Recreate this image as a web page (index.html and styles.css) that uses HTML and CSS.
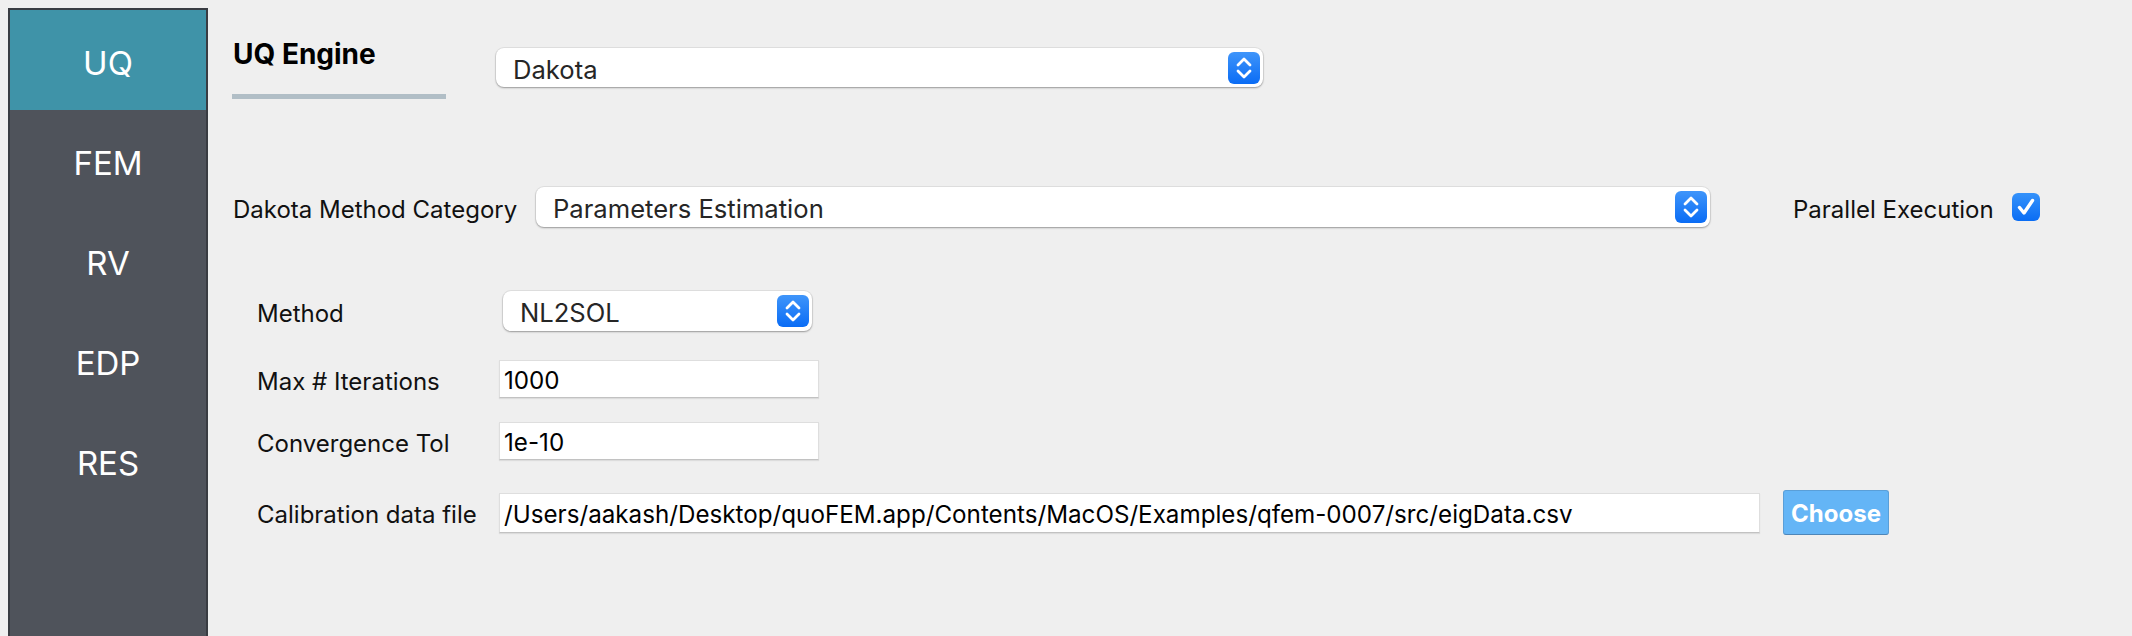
FILE: index.html
```html
<!DOCTYPE html>
<html lang="en">
<head>
<meta charset="utf-8">
<title>UQ Engine</title>
<link rel="stylesheet" href="styles.css">
</head>
<body>
<div class="app">
  <nav class="sidebar">
    <div class="nav-item active">UQ</div>
    <div class="nav-item">FEM</div>
    <div class="nav-item">RV</div>
    <div class="nav-item">EDP</div>
    <div class="nav-item">RES</div>
  </nav>
  <main class="content">
    <div class="engine-row">
      <div class="engine-tab">
        <div class="engine-title">UQ Engine</div>
        <div class="engine-bar"></div>
      </div>
      <div class="combo combo-engine">
        <span class="combo-text">Dakota</span>
        <svg class="stepper" viewBox="0 0 32 32" width="32" height="32"><defs><linearGradient id="sg1" x1="0" y1="0" x2="0" y2="1"><stop offset="0" stop-color="#3f95fa"/><stop offset="1" stop-color="#0a6cf5"/></linearGradient></defs><rect width="32" height="32" rx="6" fill="url(#sg1)"/><path d="M10 13 L16 7 L22 13 M10 19 L16 25 L22 19" fill="none" stroke="#fff" stroke-width="2.8" stroke-linecap="round" stroke-linejoin="round"/></svg>
      </div>
    </div>

    <div class="category-row">
      <span class="label category-label">Dakota Method Category</span>
      <div class="combo combo-category">
        <span class="combo-text">Parameters Estimation</span>
        <svg class="stepper" viewBox="0 0 32 32" width="32" height="32"><defs><linearGradient id="sg2" x1="0" y1="0" x2="0" y2="1"><stop offset="0" stop-color="#3f95fa"/><stop offset="1" stop-color="#0a6cf5"/></linearGradient></defs><rect width="32" height="32" rx="6" fill="url(#sg2)"/><path d="M10 13 L16 7 L22 13 M10 19 L16 25 L22 19" fill="none" stroke="#fff" stroke-width="2.8" stroke-linecap="round" stroke-linejoin="round"/></svg>
      </div>
      <span class="label parallel-label">Parallel Execution</span>
      <svg class="checkbox" viewBox="0 0 28 28" width="28" height="28"><defs><linearGradient id="cg" x1="0" y1="0" x2="0" y2="1"><stop offset="0" stop-color="#3592fa"/><stop offset="1" stop-color="#0a6df4"/></linearGradient></defs><rect width="28" height="28" rx="6" fill="url(#cg)"/><path d="M7.5 14.5 L12 20 L20.5 7.5" fill="none" stroke="#fff" stroke-width="3.4" stroke-linecap="round" stroke-linejoin="round"/></svg>
    </div>

    <div class="method-form">
      <div class="form-row row-method">
        <span class="label form-label">Method</span>
        <div class="combo combo-method">
          <span class="combo-text">NL2SOL</span>
          <svg class="stepper" viewBox="0 0 32 32" width="32" height="32"><defs><linearGradient id="sg3" x1="0" y1="0" x2="0" y2="1"><stop offset="0" stop-color="#3f95fa"/><stop offset="1" stop-color="#0a6cf5"/></linearGradient></defs><rect width="32" height="32" rx="6" fill="url(#sg3)"/><path d="M10 13 L16 7 L22 13 M10 19 L16 25 L22 19" fill="none" stroke="#fff" stroke-width="2.8" stroke-linecap="round" stroke-linejoin="round"/></svg>
        </div>
      </div>
      <div class="form-row row-iter">
        <span class="label form-label">Max # Iterations</span>
        <div class="text-input short">1000</div>
      </div>
      <div class="form-row row-tol">
        <span class="label form-label">Convergence Tol</span>
        <div class="text-input short">1e-10</div>
      </div>
      <div class="form-row row-file">
        <span class="label form-label">Calibration data file</span>
        <div class="text-input file">/Users/aakash/Desktop/quoFEM.app/Contents/MacOS/Examples/qfem-0007/src/eigData.csv</div>
        <button class="choose-btn" type="button">Choose</button>
      </div>
    </div>
  </main>
</div>
</body>
</html>
```

FILE: styles.css
```css
* { box-sizing: border-box; }

html, body {
  margin: 0;
  padding: 0;
  height: 100%;
  background: #efefef;
  font-family: Inter, "Noto Sans", "Liberation Sans", sans-serif;
  color: #111;
  overflow: hidden;
}

.app {
  display: flex;
  height: 100%;
}

.sidebar {
  flex: none;
  width: 200px;
  margin: 8px 0 0 8px;
  background: #4f535b;
  border: 2px solid #393c42;
  border-bottom: none;
  display: flex;
  flex-direction: column;
}

.nav-item {
  height: 100px;
  display: flex;
  align-items: center;
  justify-content: center;
  padding-top: 5px;
  color: #fff;
  font-size: 33px;
  font-weight: 400;
}

.nav-item.active {
  background: #3f93a8;
}

.content {
  flex: 1;
  padding: 37px 0 0 24px;
}

.engine-row {
  display: flex;
  align-items: flex-start;
}

.engine-tab {
  width: 214px;
}

.engine-title {
  font-size: 28px;
  font-weight: 700;
  line-height: 34px;
  color: #000;
  padding-left: 1px;
}

.engine-bar {
  height: 5px;
  margin-top: 23px;
  background: #b1bec6;
}

.combo {
  display: flex;
  align-items: center;
  justify-content: space-between;
  background: #fff;
  border-radius: 8px;
  box-shadow: 0 0 0 1px rgba(0, 0, 0, 0.06), 0 1px 2px rgba(0, 0, 0, 0.32);
  padding: 0 3px 0 17px;
}

.combo-text {
  font-size: 25.6px;
  color: #262626;
  padding-top: 3px;
}

.stepper {
  display: block;
  flex: none;
}

.combo-engine {
  margin: 11px 0 0 50px;
  width: 767px;
  height: 39px;
}

.category-row {
  display: flex;
  align-items: center;
  margin-top: 88px;
  height: 40px;
}

.label {
  font-size: 24px;
  color: #111;
  white-space: nowrap;
  padding-top: 4px;
}

.category-label {
  width: 304px;
  padding-left: 1px;
}

.combo-category {
  width: 1174px;
  height: 40px;
}

.parallel-label {
  margin-left: 83px;
}

.checkbox {
  display: block;
  margin-left: 18px;
  flex: none;
}

.method-form {
  margin-top: 64px;
  padding-left: 25px;
  display: flex;
  flex-direction: column;
}

.form-row {
  display: flex;
  align-items: center;
}

.form-label {
  width: 242px;
}

.row-method { height: 40px; }
.row-iter { height: 38px; margin-top: 29px; }
.row-tol { height: 38px; margin-top: 24px; }
.row-file { height: 45px; margin-top: 30px; }

.combo-method {
  margin-left: 4px;
  width: 309px;
  height: 40px;
}

.text-input {
  background: #fff;
  border: 1px solid #dedede;
  border-bottom-color: #c2c2c2;
  box-shadow: 0 1px 1px rgba(0, 0, 0, 0.08);
  font-size: 24.2px;
  color: #000;
  padding: 3px 4px 0;
  display: flex;
  align-items: center;
  white-space: nowrap;
  overflow: hidden;
}

.text-input.short {
  width: 320px;
  height: 38px;
}

.text-input.file {
  width: 1261px;
  height: 40px;
}

.choose-btn {
  margin-left: 23px;
  width: 106px;
  height: 45px;
  background: #64b5f6;
  border: 1px solid #5a9fd8;
  border-bottom-color: #4e86b8;
  border-radius: 3px;
  color: #fff;
  font-family: Inter, "Noto Sans", "Liberation Sans", sans-serif;
  font-size: 24px;
  font-weight: 700;
  padding: 2px 0 0;
}
```
